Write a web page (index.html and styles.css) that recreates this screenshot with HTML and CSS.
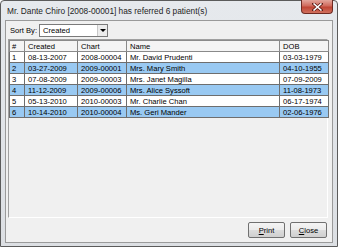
FILE: index.html
```html
<!DOCTYPE html>
<html>
<head>
<meta charset="utf-8">
<link rel="stylesheet" href="styles.css">
</head>
<body>
<div class="window">
  <div class="titlebar">
    <span class="title">Mr. Dante Chiro [2008-00001] has referred 6 patient(s)</span>
    <div class="close-x">
      <svg width="11" height="8" viewBox="0 0 11 8"><path d="M1.5 0.5 L9.5 7.5 M9.5 0.5 L1.5 7.5" stroke="#5a1a14" stroke-width="3" stroke-linecap="square"/><path d="M1.5 0.5 L9.5 7.5 M9.5 0.5 L1.5 7.5" stroke="#ffffff" stroke-width="1.6"/></svg>
    </div>
  </div>
  <div class="client">
    <div class="sortrow">
      <span class="sortlabel">Sort By:</span>
      <div class="combo"><span class="combo-text">Created</span><span class="combo-btn"><span class="tri"></span></span></div>
    </div>
    <div class="grid">
      <table>
        <colgroup><col class="c1"><col class="c2"><col class="c3"><col class="c4"><col class="c5"></colgroup>
        <thead><tr><th>#</th><th>Created</th><th>Chart</th><th>Name</th><th>DOB</th></tr></thead>
        <tbody>
          <tr><td>1</td><td>08-13-2007</td><td>2008-00004</td><td>Mr. David Prudenti</td><td>03-03-1979</td></tr>
          <tr class="sel"><td>2</td><td>03-27-2009</td><td>2009-00001</td><td>Mrs. Mary Smith</td><td>04-10-1955</td></tr>
          <tr><td>3</td><td>07-08-2009</td><td>2009-00003</td><td>Mrs. Janet Magilla</td><td>07-09-2009</td></tr>
          <tr class="sel"><td>4</td><td>11-12-2009</td><td>2009-00006</td><td>Mrs. Alice Syssoft</td><td>11-08-1973</td></tr>
          <tr><td>5</td><td>05-13-2010</td><td>2010-00003</td><td>Mr. Charlie Chan</td><td>06-17-1974</td></tr>
          <tr class="sel"><td>6</td><td>10-14-2010</td><td>2010-00004</td><td>Ms. Geri Mander</td><td>02-06-1976</td></tr>
        </tbody>
      </table>
    </div>
    <div class="buttons">
      <button class="btn"><u>P</u>rint</button>
      <button class="btn"><u>C</u>lose</button>
    </div>
  </div>
</div>
</body>
</html>
```

FILE: styles.css
```css
html, body {
  margin: 0;
  padding: 0;
  background: #ffffff;
}
.window {
  width: 338px;
  height: 247px;
  box-sizing: border-box;
  border: 1px solid #5b5b5b;
  border-radius: 4px 4px 0 0;
  background: linear-gradient(#e6e9ed, #dcdfe3);
  display: flex;
  flex-direction: column;
  font-family: "Liberation Sans", Arial, sans-serif;
  color: #000;
}
.titlebar {
  height: 19px;
  display: flex;
  align-items: flex-start;
  padding-left: 6px;
  padding-right: 4px;
}
.title {
  font-family: "Liberation Sans", Arial, sans-serif;
  font-size: 8.3px;
  color: #1e1e1e;
  margin-top: 5px;
}
.close-x {
  margin-left: auto;
  margin-top: -1px;
  width: 32px;
  height: 14px;
  box-sizing: border-box;
  border: 1px solid #6e2a22;
  border-top: none;
  border-radius: 0 0 4px 4px;
  background: linear-gradient(#e3a69c, #d06a5c 45%, #c04534 55%, #d0705e);
  display: flex;
  align-items: center;
  justify-content: center;
}
.client {
  flex: 1;
  margin: 0 4px 3px 4px;
  border: 1px solid #9a9a9a;
  background: #f0f0f0;
  display: flex;
  flex-direction: column;
  padding: 3px 3px 4px 2px;
}
.sortrow {
  display: flex;
  align-items: center;
  height: 13px;
}
.sortlabel {
  font-size: 7.6px;
  margin-left: 2px;
  width: 29px;
}
.combo {
  width: 69px;
  height: 13px;
  box-sizing: border-box;
  border: 1px solid #7a7a7a;
  background: #fff;
  display: flex;
  align-items: center;
}
.combo-text {
  flex: 1;
  font-size: 7.6px;
  padding-left: 3px;
}
.combo-btn {
  width: 10px;
  height: 11px;
  box-sizing: border-box;
  border-left: 1px solid #c8c8c8;
  background: #ececec;
  display: flex;
  align-items: center;
  justify-content: center;
}
.tri {
  width: 0;
  height: 0;
  border-left: 3px solid transparent;
  border-right: 3px solid transparent;
  border-top: 3px solid #000;
}
.grid {
  margin-top: 2px;
  width: 320px;
  height: 179px;
  box-sizing: border-box;
  background: #f0f0f0;
  border-left: 1px solid #a0a0a0;
  border-top: 1px solid #a0a0a0;
  border-right: 1px solid #fff;
  border-bottom: 1px solid #fff;
}
.grid table {
  border-collapse: collapse;
  table-layout: fixed;
  width: 319px;
  font-size: 7.6px;
}
col.c1 { width: 15px; }
col.c2 { width: 53px; }
col.c3 { width: 49px; }
col.c4 { width: 153px; }
col.c5 { width: 49px; }
th, td {
  height: 11px;
  padding: 0 0 0 3px;
  box-sizing: border-box;
  border: 1px solid #6e6e6e;
  text-align: left;
  font-weight: normal;
  white-space: nowrap;
  overflow: hidden;
  line-height: 9px;
}
th {
  background: #f4f4f4;
  border-color: #8a8a8a;
  padding-left: 3px;
}
td:first-child, th:first-child {
  padding-left: 2px;
}
tbody tr {
  background: #ffffff;
}
tbody tr.sel {
  background: #99c9f2;
}
.buttons {
  margin-top: auto;
  display: flex;
  justify-content: flex-end;
  gap: 5px;
  padding-right: 2px;
}
.btn {
  width: 37px;
  height: 16px;
  padding: 0;
  box-sizing: border-box;
  border: 1px solid #707070;
  border-radius: 2px;
  background: linear-gradient(#f4f4f4, #ebebeb 50%, #dddddd 50%, #cfcfcf);
  font-family: "Liberation Sans", Arial, sans-serif;
  font-size: 7.6px;
  color: #000;
}
```
